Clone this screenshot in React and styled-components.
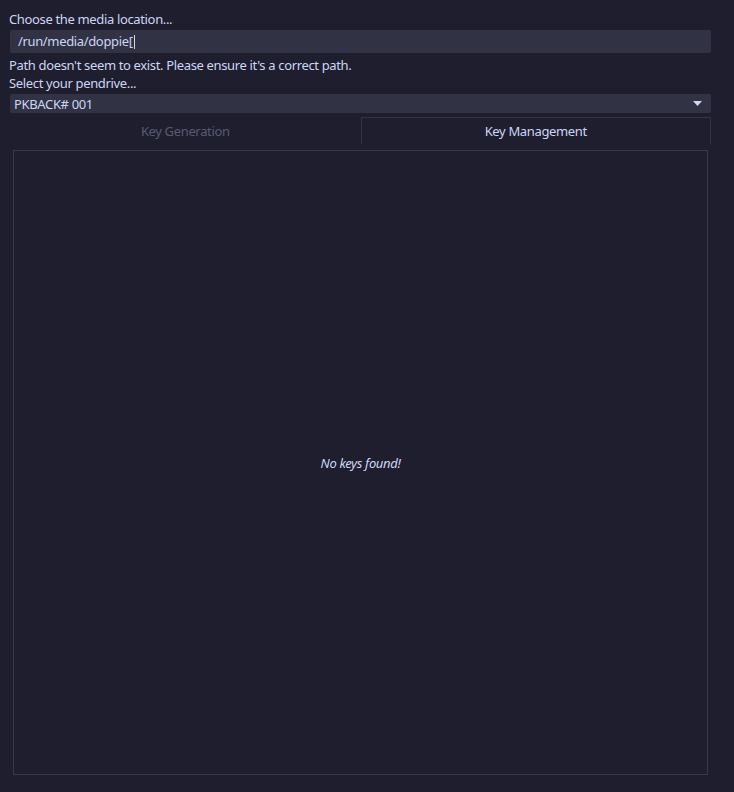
import React from 'react';
import styled, { createGlobalStyle } from 'styled-components';

const GlobalStyle = createGlobalStyle`
  html, body {
    margin: 0;
    padding: 0;
    background: #1e1e2e;
    height: 100%;
  }
  body {
    font-family: "Noto Sans", "Open Sans", sans-serif;
    font-size: 13px;
    letter-spacing: -0.35px;
    color: #cdd6f4;
  }
`;

const Window = styled.div`
  display: flex;
  flex-direction: column;
  width: 734px;
  height: 792px;
  box-sizing: border-box;
  padding: 10px 23px 14px 10px;
`;

const Label = styled.div`
  line-height: 18px;
  margin-left: -1px;
  white-space: nowrap;
`;

const PathField = styled.div`
  display: flex;
  align-items: center;
  height: 23px;
  margin: 2px 0 3px;
  padding: 0 8px;
  background: #313244;
  border-radius: 2px;
  line-height: 23px;
`;

const Caret = styled.span`
  display: inline-block;
  width: 1px;
  height: 14px;
  margin-left: 1px;
  background: #cdd6f4;
`;

const Select = styled.div`
  display: flex;
  align-items: center;
  justify-content: space-between;
  height: 19px;
  margin-top: 2px;
  padding: 0 9px 0 4px;
  background: #313244;
  border-radius: 2px;
`;

const TabWidget = styled.div`
  display: flex;
  flex-direction: column;
  flex: 1;
  margin-top: 4px;
`;

const TabBar = styled.div`
  display: flex;
  height: 27px;
`;

const Tab = styled.div`
  flex: 1;
  display: flex;
  align-items: center;
  justify-content: center;
  box-sizing: border-box;
  color: ${p => (p.$active ? '#cdd6f4' : '#585b70')};
  border: 1px solid ${p => (p.$active ? '#313244' : 'transparent')};
  border-bottom: none;
`;

const Pane = styled.div`
  flex: 1;
  display: flex;
  padding: 6px 3px 3px;
`;

const KeyList = styled.div`
  flex: 1;
  display: flex;
  align-items: center;
  justify-content: center;
  border: 1px solid #383a4c;
`;

const Empty = styled.span`
  font-style: italic;
  color: #cdd6f4;
`;

const Arrow = () => (
  <svg width="9" height="5" viewBox="0 0 9 5">
    <path d="M0 0 H9 L4.5 5 Z" fill="#cdd6f4" />
  </svg>
);

export default function App() {
  return (
    <>
      <GlobalStyle />
      <Window>
        <Label>Choose the media location...</Label>
        <PathField>
          /run/media/doppie[<Caret />
        </PathField>
        <Label>Path doesn't seem to exist. Please ensure it's a correct path.</Label>
        <Label>Select your pendrive...</Label>
        <Select>
          <span>PKBACK# 001</span>
          <Arrow />
        </Select>
        <TabWidget>
          <TabBar>
            <Tab>Key Generation</Tab>
            <Tab $active>Key Management</Tab>
          </TabBar>
          <Pane>
            <KeyList>
              <Empty>No keys found!</Empty>
            </KeyList>
          </Pane>
        </TabWidget>
      </Window>
    </>
  );
}
